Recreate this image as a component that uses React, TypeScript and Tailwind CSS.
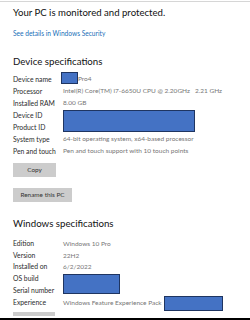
const deviceRows: [string, string][] = [
  ['Processor', 'Intel(R) Core(TM) i7-6650U CPU @ 2.20GHz   2.21 GHz'],
  ['Installed RAM', '8.00 GB'],
]

const Redact = ({ className }: { className: string }) => (
  <div className={`border border-[#1f3561] bg-[#4472c4] ${className}`} />
)

const Label = ({ children }: { children: React.ReactNode }) => (
  <div className="whitespace-nowrap text-[6.8px] text-[#2b2b2b]">{children}</div>
)

const Value = ({ children }: { children: React.ReactNode }) => (
  <div className="whitespace-pre text-[6.5px] text-[#767676]">{children}</div>
)

export default function App() {
  return (
    <div
      className="relative h-[320px] w-[250px] overflow-hidden bg-white"
      style={{ fontFamily: 'Lato, "Open Sans", sans-serif' }}
    >
      <div className="mt-px h-px bg-[#d6d6d6]" />
      <div className="px-[13px]">
        <div className="mt-[4px] text-[9.6px] leading-[14px] text-[#111]">
          Your PC is monitored and protected.
        </div>
        <div className="mt-[8px] text-[6.6px] leading-[10px] text-[#1a6fb8]">
          See details in Windows Security
        </div>

        <div className="mt-[15px] text-[9.7px] leading-[16px] text-[#111]">Device specifications</div>
        <div className="mt-[4px] grid grid-cols-[50px_1fr] leading-[12px]">
          <Label>Device name</Label>
          <div className="flex items-start">
            <Redact className="-ml-[2px] -mt-[1px] h-[12px] w-[17px]" />
            <Value>Pro4</Value>
          </div>
          {deviceRows.map(([k, v]) => (
            <div key={k} className="contents">
              <Label>{k}</Label>
              <Value>{v}</Value>
            </div>
          ))}
          <Label>Device ID</Label>
          <div className="row-span-2">
            <Redact className="mt-px h-[22px] w-[132px]" />
          </div>
          <Label>Product ID</Label>
          <Label>System type</Label>
          <Value>64-bit operating system, x64-based processor</Value>
          <Label>Pen and touch</Label>
          <Value>Pen and touch support with 10 touch points</Value>
        </div>

        <button className="mt-[6px] flex h-[14px] w-[43px] items-center justify-center bg-[#cccccc] text-[6.4px] text-[#333]">
          Copy
        </button>
        <button className="mt-[11px] flex h-[14px] w-[59px] items-center justify-center bg-[#cccccc] text-[6.4px] text-[#333]">
          Rename this PC
        </button>

        <div className="mt-[13px] text-[9.7px] leading-[16px] text-[#111]">Windows specifications</div>
        <div className="mt-[7px] grid grid-cols-[50px_1fr] leading-[11.7px]">
          <Label>Edition</Label>
          <Value>Windows 10 Pro</Value>
          <Label>Version</Label>
          <Value>22H2</Value>
          <Label>Installed on</Label>
          <Value>6/2/2022</Value>
          <Label>OS build</Label>
          <div className="row-span-2">
            <Redact className="mt-px h-[20px] w-[57px]" />
          </div>
          <Label>Serial number</Label>
          <Label>Experience</Label>
          <div className="flex items-start">
            <Value>Windows Feature Experience Pack</Value>
            <Redact className="ml-[2px] -mt-[1px] h-[15px] w-[59px]" />
          </div>
        </div>

        <div className="mt-[1px] h-[4px] w-[42px] bg-[#cccccc]" />
      </div>
      <div className="absolute bottom-0 left-0 h-[2px] w-full bg-black" />
    </div>
  )
}
